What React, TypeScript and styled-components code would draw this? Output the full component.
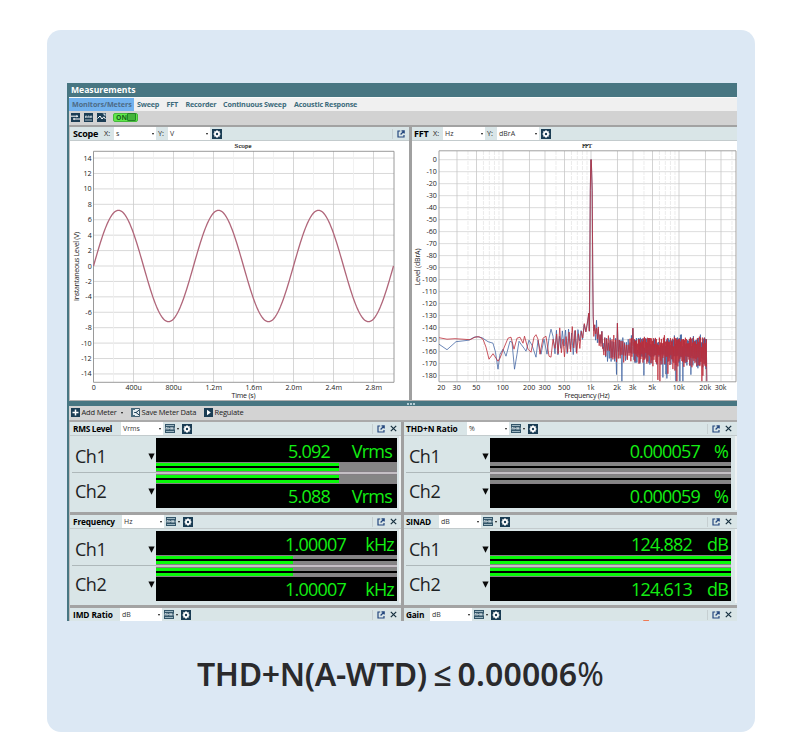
import React from "react";
import styled, { createGlobalStyle } from "styled-components";

const Global = createGlobalStyle`
  * { box-sizing: border-box; }
  body { margin: 0; background: #fff; font-family: "Open Sans", "Noto Sans", sans-serif; color: #111; }
`;

const Page = styled.div`
  width: 800px;
  height: 733px;
  padding: 30px 45px 0 47px;
  overflow: hidden;
`;

const Card = styled.main`
  height: 702px;
  padding: 53px 18px 0 20px;
  border-radius: 14px;
  background: #dce8f4;
`;

const AppWindow = styled.section`
  width: 670px;
  height: 538px;
  overflow: hidden;
  display: flex;
  flex-direction: column;
  border-left: 2px solid #487682;
  background: #fff;
`;

const TitleBar = styled.div`
  height: 14px;
  flex: none;
  padding-left: 2px;
  background: #487682;
  color: #fff;
  font-size: 8.6px;
  font-weight: 700;
  line-height: 14px;
`;

const TabBar = styled.nav`
  height: 14px;
  flex: none;
  display: flex;
  border-top: 1px solid #fafafa;
  background: #f0f0f0;
`;

const Tab = styled.span<{ $w: number; $active?: boolean; $ls?: number }>`
  width: ${(p) => p.$w}px;
  flex: none;
  padding-left: 3px;
  font-size: 7.2px;
  font-weight: 700;
  line-height: 13px;
  letter-spacing: ${(p) => p.$ls ?? -0.19}px;
  white-space: nowrap;
  color: ${(p) => (p.$active ? "#4d6b86" : "#3c6b7b")};
  background: ${(p) => (p.$active ? "#72b2ee" : "transparent")};
`;

const ToolBar = styled.div`
  height: 16px;
  flex: none;
  display: flex;
  align-items: center;
  gap: 4px;
  padding: 0 0 2px 2px;
  background: #d2d2d2;
  border-bottom: 2px solid #a2a2a2;
`;

const OnSwitch = styled.span`
  width: 25px;
  height: 9px;
  margin-left: 3px;
  display: flex;
  align-items: center;
  justify-content: space-between;
  padding: 0 1px 0 2px;
  border: 1px solid #47b83c;
  border-radius: 2px;
  background: #5fe84b;
  color: #17621a;
  font-size: 6.8px;
  line-height: 7px;
  font-weight: 700;
  &::after {
    content: "";
    width: 8px;
    height: 6px;
    border: 1px solid #238426;
    background: #43b43b;
    border-radius: 1px;
  }
`;

const Graphs = styled.div`
  height: 274px;
  flex: none;
  display: grid;
  grid-template-columns: 339px 3px 1fr;
  border-left: 1px solid #bdbdbd;
  border-bottom: 1px solid #b0b0b0;
`;

const Divider = styled.div`
  background: #a0a0a0;
`;

const GraphPanel = styled.section`
  min-width: 0;
  overflow: hidden;
  background: #fff;
`;

const Header = styled.header<{ $pad?: number }>`
  height: 14px;
  display: flex;
  align-items: center;
  padding-left: ${(p) => p.$pad ?? 3}px;
  background: #d9e5e7;
  border-bottom: 1px solid #c3cbcd;
`;

const HeaderTitle = styled.span<{ $w: number; $big?: boolean; $ls?: number }>`
  width: ${(p) => p.$w}px;
  flex: none;
  font-size: ${(p) => (p.$big ? 9 : 8.3)}px;
  line-height: 13px;
  font-weight: 700;
  letter-spacing: ${(p) => p.$ls ?? -0.2}px;
  white-space: nowrap;
  color: #000;
`;

const AxisTag = styled.span<{ $w?: number }>`
  width: ${(p) => p.$w ?? 10}px;
  flex: none;
  font-size: 7.4px;
  line-height: 13px;
  color: #222;
`;

const Select = styled.span`
  width: 42px;
  height: 13px;
  flex: none;
  display: flex;
  align-items: center;
  justify-content: space-between;
  padding: 0 2px;
  background: #fff;
  color: #333;
  font-size: 7px;
  line-height: 13px;
`;

const Caret = styled.i`
  width: 0;
  height: 0;
  flex: none;
  border: 1.5px solid transparent;
  border-top: 2px solid #111;
  border-bottom: 0;
`;

const IconGroup = styled.span<{ $gap?: number }>`
  display: flex;
  align-items: center;
  gap: 2px;
  margin-left: 2px;
  margin-right: ${(p) => p.$gap ?? 0}px;
`;

const HeaderActions = styled.span<{ $right: number }>`
  height: 10px;
  margin-left: auto;
  margin-right: ${(p) => p.$right}px;
  display: flex;
  align-items: center;
  gap: 5px;
  padding-left: 4px;
  border-left: 1px solid #c6cfd1;
`;

const Splitter = styled.div`
  height: 5px;
  flex: none;
  display: flex;
  justify-content: center;
  align-items: center;
  gap: 1px;
  padding-left: 15px;
  background: #487682;
`;

const Grip = styled.i`
  width: 2px;
  height: 2px;
  background: #b4ccd4;
`;

const MeterBar = styled.div`
  height: 16px;
  flex: none;
  display: flex;
  align-items: center;
  padding: 0 0 1px 2px;
  background: #d3d3d3;
  border-bottom: 2px solid #aaa;
  font-size: 7.5px;
  line-height: 13px;
  color: #222;
`;

const MeterAction = styled.span<{ $w: number; $ls?: number }>`
  width: ${(p) => p.$w}px;
  flex: none;
  display: flex;
  align-items: center;
  gap: 1.5px;
  white-space: nowrap;
  letter-spacing: ${(p) => p.$ls ?? -0.18}px;
  & > i { margin-left: 3px; }
`;

const Meters = styled.div`
  flex: 1;
  min-height: 0;
  overflow: hidden;
  display: grid;
  grid-template-columns: 331px 3px 1fr;
  grid-template-rows: 100%;
  border-left: 1px solid #bdbdbd;
`;

const MeterColumn = styled.div`
  position: relative;
  min-width: 0;
  background: #d9e5e7;
`;

const Meter = styled.article`
  height: 93px;
  border-bottom: 3px solid #a3a3a3;
  &:nth-of-type(3) { border-bottom: 0; }
`;

const MeterBody = styled.div`
  display: grid;
  grid-template-columns: 86px 241px;
  padding-top: 2px;
  height: 74px;
  border-right: 2px solid #eef2f3;
`;

const Channels = styled.div`
  display: grid;
  grid-template-rows: 34px 37px;
  padding-left: 2px;
`;

const Channel = styled.div<{ $lower?: boolean }>`
  display: flex;
  justify-content: space-between;
  align-items: center;
  padding: ${(p) => (p.$lower ? "0 1px 0 3px" : "2px 1px 0 3px")};
  border-top: ${(p) => (p.$lower ? "1px solid #aeb8ba" : "0")};
  font-size: 18px;
  line-height: 24px;
  letter-spacing: -0.5px;
  color: #1d2224;
`;

const Display = styled.div`
  height: 70px;
  display: grid;
  grid-template-rows: 24px 10px 2px 10px 24px;
  background: #c4bfc4;
`;

const Readout = styled.div<{ $lower?: boolean; $pad: number }>`
  display: flex;
  justify-content: flex-end;
  overflow: hidden;
  padding-right: ${(p) => p.$pad}px;
  background: #000;
  color: #13ee13;
  font-size: 18px;
  line-height: ${(p) => (p.$lower ? 25 : 26)}px;
  letter-spacing: -0.8px;
  white-space: nowrap;
`;

const Unit = styled.span<{ $w: number }>`
  width: ${(p) => p.$w}px;
  text-align: right;
`;

const Track = styled.div<{ $fill: number; $line: boolean }>`
  border: solid #858085;
  border-width: 1px 0;
  background:
    linear-gradient(#000, #000) 0 3px / ${(p) => (p.$line ? 100 : p.$fill)}% 2px no-repeat,
    linear-gradient(#08f808, #08f808) 0 0 / ${(p) => p.$fill}% 100% no-repeat,
    #858585;
`;

const Caption = styled.h1`
  margin: 29px 0 0;
  padding-right: 3px;
  text-align: center;
  font-family: "Noto Sans", "Open Sans", sans-serif;
  font-size: 32px;
  line-height: 48px;
  font-weight: 600;
  letter-spacing: -0.35px;
  word-spacing: -1.6px;
  color: #2a2a2c;
  white-space: nowrap;
`;

const Figure = styled.span`
  letter-spacing: 0.15px;
`;

const Percent = styled.span`
  font-weight: 400;
`;

const Svg = styled.svg`
  display: block;
  flex: none;
`;

const NAVY = "#1b3d54";

const GearIcon = () => (
  <Svg width="10" height="10" viewBox="0 0 10 10">
    <rect width="10" height="10" fill={NAVY} />
    <path d="M4 1.5h2v1l1.2-.4.8 1-.6.9 1.1.4v1.2l-1.1.4.6 1-.8.8L6 7.5v1H4v-1l-1.2.3-.8-.8.6-1-1.1-.4V4.4L2.6 4 2 3.1l.8-1 1.2.4z" fill="#fff" />
    <circle cx="5" cy="5" r="1.2" fill={NAVY} />
  </Svg>
);

const MeterIcon = () => (
  <Svg width="10" height="9" viewBox="0 0 10 9">
    <rect width="10" height="9" fill="#34566a" />
    <path d="M1 1.5h8M1 7.5h8" stroke="#a9bfca" strokeWidth=".9" />
    <path d="M1 5.5V3.6h1.2v1.9M3.3 5.5V3.6l1 1 1-1v1.9M6.5 5.5V3.6h1v1.9M9 3.6v1.9" stroke="#eef5f8" strokeWidth=".75" fill="none" />
  </Svg>
);

const PopOutIcon = () => (
  <Svg width="8" height="8" viewBox="0 0 8 8" fill="none" stroke="#24477e" strokeWidth="1.2">
    <path d="M3.2 1H1v6h6V5M4.5.8h2.7v2.7M7 1 3.6 4.5" />
  </Svg>
);

const CloseIcon = () => (
  <Svg width="7" height="7" viewBox="0 0 7 7" stroke="#17303f" strokeWidth="1.2">
    <path d="M.8.8l5.4 5.4M6.2.8.8 6.2" />
  </Svg>
);

const ListIcon = () => (
  <Svg width="9" height="9" viewBox="0 0 9 9">
    <rect width="9" height="9" fill={NAVY} />
    <path d="M0 3.2h6.5M2.5 6h6.5" stroke="#fff" strokeWidth="1" />
    <path d="M5.5 1.8 7.3 3.2 5.5 4.4zM3.5 4.8 1.8 6l1.7 1.3z" fill="#fff" />
  </Svg>
);

const BarsIcon = () => (
  <Svg width="9" height="9" viewBox="0 0 9 9">
    <rect width="9" height="9" fill={NAVY} />
    <path d="M1 7h7M1.5 5V3h1.3v2M4 5V3h1.2v2M6.5 5V3h1.2v2" stroke="#e5eef2" strokeWidth=".7" fill="none" />
  </Svg>
);

const WaveIcon = () => (
  <Svg width="9" height="9" viewBox="0 0 9 9">
    <rect width="9" height="9" fill={NAVY} />
    <path d="M.5 5.5 3 3l2 3 1.8-2.2L8.5 6" stroke="#fff" strokeWidth="1" fill="none" />
    <path d="M5.5.5h3v3z" fill="#c5d6de" />
  </Svg>
);

const PlusIcon = () => (
  <Svg width="9" height="9" viewBox="0 0 9 9">
    <rect width="9" height="9" fill={NAVY} />
    <path d="M4.5 1.5v6M1.5 4.5h6" stroke="#fff" strokeWidth="1.5" />
  </Svg>
);

const SaveIcon = () => (
  <Svg width="9" height="9" viewBox="0 0 9 9">
    <path d="M.5.5h8v8h-8z" fill="#e4edf0" stroke={NAVY} strokeWidth=".8" />
    <path d="M0 0h4v2H2v5h2v2H0z" fill="#4a6c7e" />
    <path d="M8 2.2 5 4.5l3 2.4M5 4.5H3.2" stroke={NAVY} strokeWidth="1" fill="none" />
  </Svg>
);

const PlayIcon = () => (
  <Svg width="9" height="9" viewBox="0 0 9 9">
    <rect width="9" height="9" fill={NAVY} />
    <path d="M3 1.8 6.8 4.5 3 7.2z" fill="#fff" />
  </Svg>
);

const ArrowIcon = () => (
  <Svg width="7" height="7" viewBox="0 0 7 7">
    <path d="M.4.4h6.2L3.5 6.8z" fill="#0a0a0a" />
  </Svg>
);

const TickText = styled.text`
  font-family: "Open Sans", "Noto Sans", sans-serif;
  font-size: 7.1px;
  fill: #222;
`;

const PlotTitle = styled.text`
  font-family: "Liberation Serif", serif;
  font-size: 6.6px;
  fill: #111;
  stroke: #111;
  stroke-width: 0.15px;
`;

/* Scope: 339 x 260 drawing area, plot frame from (23.5, 10) to (324, 241). */
const scopeY = (v: number) => 125 - v * 7.71;
const scopePath = Array.from({ length: 301 }, (_, i) => {
  const y = scopeY(7.22 * Math.sin((i / 100) * 2 * Math.PI));
  return `${i ? "L" : "M"}${23.5 + i} ${y.toFixed(2)}`;
}).join("");

const ScopePlot = () => (
  <Svg width="339" height="260" viewBox="0 0 339 260">
    <PlotTitle x="173" y="7.2" textAnchor="middle" textLength="17">Scope</PlotTitle>
    {Array.from({ length: 15 }, (_, i) => 14 - i * 2).map((v) => (
      <g key={v}>
        <path d={`M23.5 ${scopeY(v)}H324`} stroke="#c8c8c8" strokeWidth=".7" />
        <TickText x="21.7" y={scopeY(v) + 2.5} textAnchor="end">{v}</TickText>
      </g>
    ))}
    {Array.from({ length: 14 }, (_, i) => i + 1).map((i) => (
      <path key={i} d={`M${23.5 + i * 20} 10V241`} stroke={i % 2 ? "#ededed" : "#cbcbcb"} strokeWidth=".8" />
    ))}
    {["0", "400u", "800u", "1.2m", "1.6m", "2.0m", "2.4m", "2.8m"].map((t, i) => (
      <TickText key={t} x={23.7 + i * 40} y="249.4" textAnchor="middle">{t}</TickText>
    ))}
    <path d="M23.5 10.3H324V241.3H23.5z" fill="none" stroke="#8f8f8f" strokeWidth=".9" />
    <path d={scopePath} fill="none" stroke="#b0667a" strokeWidth="1.3" />
    <TickText x="173.5" y="256.8" textAnchor="middle" textLength="24">Time (s)</TickText>
    <TickText transform="translate(8.5 125.5) rotate(-90)" textAnchor="middle" textLength="69">Instantaneous Level (V)</TickText>
  </Svg>
);

/* FFT: 325 x 260 drawing area; logarithmic frequency axis, 88 px per decade. */
const fftX = (f: number) => 179 + 88 * Math.log10(f / 1000);
const fftY = (db: number) => 18.7 - db * 1.199;
const redStart = [439,337.5,447,339,455,338.5,463,339,470,339.5,475,337,479,336.5,483,339,486,347,489,359,493,353.5,498,361,500,358,503,350,508,338,511,337,514,349,517,338,520,337,523,343,524.5,336,528,349,531,352,534,337,536,334.5,538,339,540,354,543,338,546,336,549,356,551,357,553,339];
const blueStart = [439,344,447,349.5,456,341.5,469,340,474,337,477,336.5,482,337.5,488,341.5,493,343,495.5,352,498,369,500,354,503,349,506,356,510,341,512,342,514.5,369,517,354,519,341,521,344,524,348,526,351,529,340,532,345,536,357,538,340,541,354,544,339,547,354,549,338,551,329,553,336];
const spurs: [number, number][] = [[617.3, 323], [632.7, 328]];

function trace(start: number[], seed: number, depth: number) {
  let s = seed;
  const rnd = () => {
    s = (s * 1664525 + 1013904223) % 4294967296;
    return s / 4294967296;
  };
  const pts: number[][] = [];
  for (let i = 0; i < start.length; i += 2) pts.push([start[i], start[i + 1]]);
  let up = false;
  for (let x = 555; x < 588.2; x += 1.35 + rnd() * 0.4) {
    const base = 342 - Math.pow(Math.max(0, x - 568) / 20, 2) * 17;
    pts.push([x, base + (up ? -1 : 1) * (3 + rnd() * 12) * (x > 580 ? 0.6 : 1)]);
    up = !up;
  }
  pts.push([588.8, 313], [589.3, 331], [589.7, 280], [590.3, 190], [590.8, 159.5], [591.3, 159.5], [592.2, 190], [592.8, 280], [593.2, 316]);
  for (let x = 593.8; x < 603; x += 0.9) {
    const base = 324 + (x - 593) * 2;
    pts.push([x, base + (up ? -1 : 1) * (2 + rnd() * 9)]);
    up = !up;
  }
  for (let x = 603; x < 706.3; x += x < 630 ? 0.9 : 0.5) {
    const t = (x - 603) / 103;
    const top = 337.3 + rnd() * rnd() * 13 - (rnd() > 0.9 ? 3 : 0);
    const bottom = 349 + t * 8 + rnd() * 12 + (rnd() > 0.86 ? rnd() * depth : 0);
    const spur = spurs.find((p) => Math.abs(p[0] - x) < (x < 630 ? 0.45 : 0.25));
    pts.push([x, spur ? spur[1] : up ? top : Math.min(381, bottom)]);
    up = !up;
  }
  pts.push([706.3, 339], [706.8, 381]);
  return pts.map(([x, y], i) => `${i ? "L" : "M"}${(x - 412).toFixed(2)} ${(y - 140.8).toFixed(2)}`).join("");
}

const redPath = trace(redStart, 71, 19);
const bluePath = trace(blueStart, 1234, 23);
const majors: [number, string][] = [[20, "20"], [30, "30"], [50, "50"], [100, "100"], [200, "200"], [300, "300"], [500, "500"], [1000, "1k"], [2000, "2k"], [3000, "3k"], [5000, "5k"], [10000, "10k"], [20000, "20k"], [30000, "30k"]];
const minors = [40, 60, 70, 80, 90, 400, 600, 700, 800, 900, 4000, 6000, 7000, 8000, 9000, 40000];

const FftPlot = () => (
  <Svg width="325" height="260" viewBox="0 0 325 260">
    <PlotTitle x="175" y="7.2" textAnchor="middle" textLength="10">FFT</PlotTitle>
    {Array.from({ length: 19 }, (_, i) => -i * 10).map((v) => (
      <g key={v}>
        <path d={`M27 ${fftY(v)}H324`} stroke="#cdcdcd" strokeWidth=".7" />
        <TickText x="24.8" y={fftY(v) + 2.5} textAnchor="end">{v}</TickText>
      </g>
    ))}
    {minors.map((f) => (
      <path key={f} d={`M${fftX(f)} 10V240.6`} stroke="#e4e4e4" strokeWidth=".7" strokeDasharray="4 1" />
    ))}
    {majors.map(([f, t]) => (
      <g key={t}>
        {f > 20 && <path d={`M${fftX(f)} 10V240.6`} stroke="#c8c8c8" strokeWidth=".8" />}
        <TickText x={fftX(f) - 0.3} y="249.4" textAnchor="middle">{t}</TickText>
      </g>
    ))}
    <path d="M27 9.8H324V240.8H27z" fill="none" stroke="#969696" strokeWidth=".9" />
    <path d={bluePath} fill="none" stroke="#3c60a0" strokeWidth=".75" strokeLinejoin="bevel" />
    <path d={redPath} fill="none" stroke="#bd2c38" strokeWidth=".8" strokeLinejoin="bevel" />
    <TickText x="175" y="256.8" textAnchor="middle" textLength="45">Frequency (Hz)</TickText>
    <TickText transform="translate(8 126) rotate(-90)" textAnchor="middle" textLength="37">Level (dBrA)</TickText>
  </Svg>
);

type MeterData = {
  title: string; w: number; ls?: number; unit: string; values?: [string, string];
  label?: string; unitW?: number; pad?: number; fill?: number; line?: boolean;
};

const left: MeterData[] = [
  { title: "RMS Level", w: 48, ls: -0.3, unit: "Vrms", label: "Vrms", values: ["5.092", "5.088"], unitW: 62, pad: 5, fill: 76, line: false },
  { title: "Frequency", w: 49, ls: -0.15, unit: "Hz", label: "kHz", values: ["1.00007", "1.00007"], unitW: 48, fill: 57, line: true },
  { title: "IMD Ratio", w: 47, ls: -0.1, unit: "dB" },
];
const right: MeterData[] = [
  { title: "THD+N Ratio", w: 61, ls: -0.1, unit: "%", label: "%", values: ["0.000057", "0.000059"], unitW: 28, fill: 0, line: true },
  { title: "SINAD", w: 33, unit: "dB", label: "dB", values: ["124.882", "124.613"], unitW: 36, fill: 100, line: true },
  { title: "Gain", w: 24, unit: "dB" },
];

const MeterPanel = ({ m, isRight }: { m: MeterData; isRight?: boolean }) => (
  <Meter>
    <Header $pad={isRight ? 2 : 3}>
      <HeaderTitle $w={m.w} $ls={m.ls}>{m.title}</HeaderTitle>
      <Select>{m.unit}<Caret /></Select>
      <IconGroup $gap={3}><MeterIcon /><Caret /></IconGroup>
      <GearIcon />
      <HeaderActions $right={isRight ? 5 : 4}><PopOutIcon /><CloseIcon /></HeaderActions>
    </Header>
    {m.values && (
      <MeterBody>
        <Channels>
          <Channel>Ch1<ArrowIcon /></Channel>
          <Channel $lower>Ch2<ArrowIcon /></Channel>
        </Channels>
        <Display>
          <Readout $pad={m.pad ?? 3}>{m.values[0]}<Unit $w={m.unitW!}>{m.label}</Unit></Readout>
          <Track $fill={m.fill!} $line={m.line!} />
          <span />
          <Track $fill={m.fill!} $line={m.line!} />
          <Readout $lower $pad={m.pad ?? 3}>{m.values[1]}<Unit $w={m.unitW!}>{m.label}</Unit></Readout>
        </Display>
      </MeterBody>
    )}
  </Meter>
);

const AlertMark = styled.i`
  position: absolute;
  left: 239px;
  bottom: 0;
  width: 6px;
  height: 1.5px;
  border-radius: 3px 1px 0 0;
  background: #ef7a55;
`;

export default function App() {
  return (
    <Page>
      <Global />
      <Card>
        <AppWindow>
          <TitleBar>Measurements</TitleBar>
          <TabBar>
            <Tab $w={65} $active $ls={-0.07}>Monitors/Meters</Tab>
            <Tab $w={29.5}>Sweep</Tab>
            <Tab $w={19}>FFT</Tab>
            <Tab $w={37.5}>Recorder</Tab>
            <Tab $w={71}>Continuous Sweep</Tab>
            <Tab $w={80}>Acoustic Response</Tab>
          </TabBar>
          <ToolBar>
            <ListIcon /><BarsIcon /><WaveIcon />
            <OnSwitch>ON</OnSwitch>
          </ToolBar>
          <Graphs>
            <GraphPanel>
              <Header>
                <HeaderTitle $big $w={31}>Scope</HeaderTitle>
                <AxisTag>X:</AxisTag>
                <Select>s<Caret /></Select>
                <AxisTag $w={12}>&nbsp;Y:</AxisTag>
                <Select>V<Caret /></Select>
                <IconGroup><GearIcon /></IconGroup>
                <HeaderActions $right={4}><PopOutIcon /></HeaderActions>
              </Header>
              <ScopePlot />
            </GraphPanel>
            <Divider />
            <GraphPanel>
              <Header $pad={2}>
                <HeaderTitle $big $w={19}>FFT</HeaderTitle>
                <AxisTag>X:</AxisTag>
                <Select>Hz<Caret /></Select>
                <AxisTag $w={12}>&nbsp;Y:</AxisTag>
                <Select>dBrA<Caret /></Select>
                <IconGroup><GearIcon /></IconGroup>
              </Header>
              <FftPlot />
            </GraphPanel>
          </Graphs>
          <Splitter><Grip /><Grip /><Grip /></Splitter>
          <MeterBar>
            <MeterAction $w={60}><PlusIcon />Add Meter<Caret /></MeterAction>
            <MeterAction $w={73}><SaveIcon />Save Meter Data</MeterAction>
            <MeterAction $w={60}><PlayIcon />Regulate</MeterAction>
          </MeterBar>
          <Meters>
            <MeterColumn>{left.map((m) => <MeterPanel key={m.title} m={m} />)}</MeterColumn>
            <Divider />
            <MeterColumn>
              {right.map((m) => <MeterPanel key={m.title} m={m} isRight />)}
              <AlertMark />
            </MeterColumn>
          </Meters>
        </AppWindow>
        <Caption>THD+N(A-WTD) ≤ <Figure>0.00006<Percent>%</Percent></Figure></Caption>
      </Card>
    </Page>
  );
}
